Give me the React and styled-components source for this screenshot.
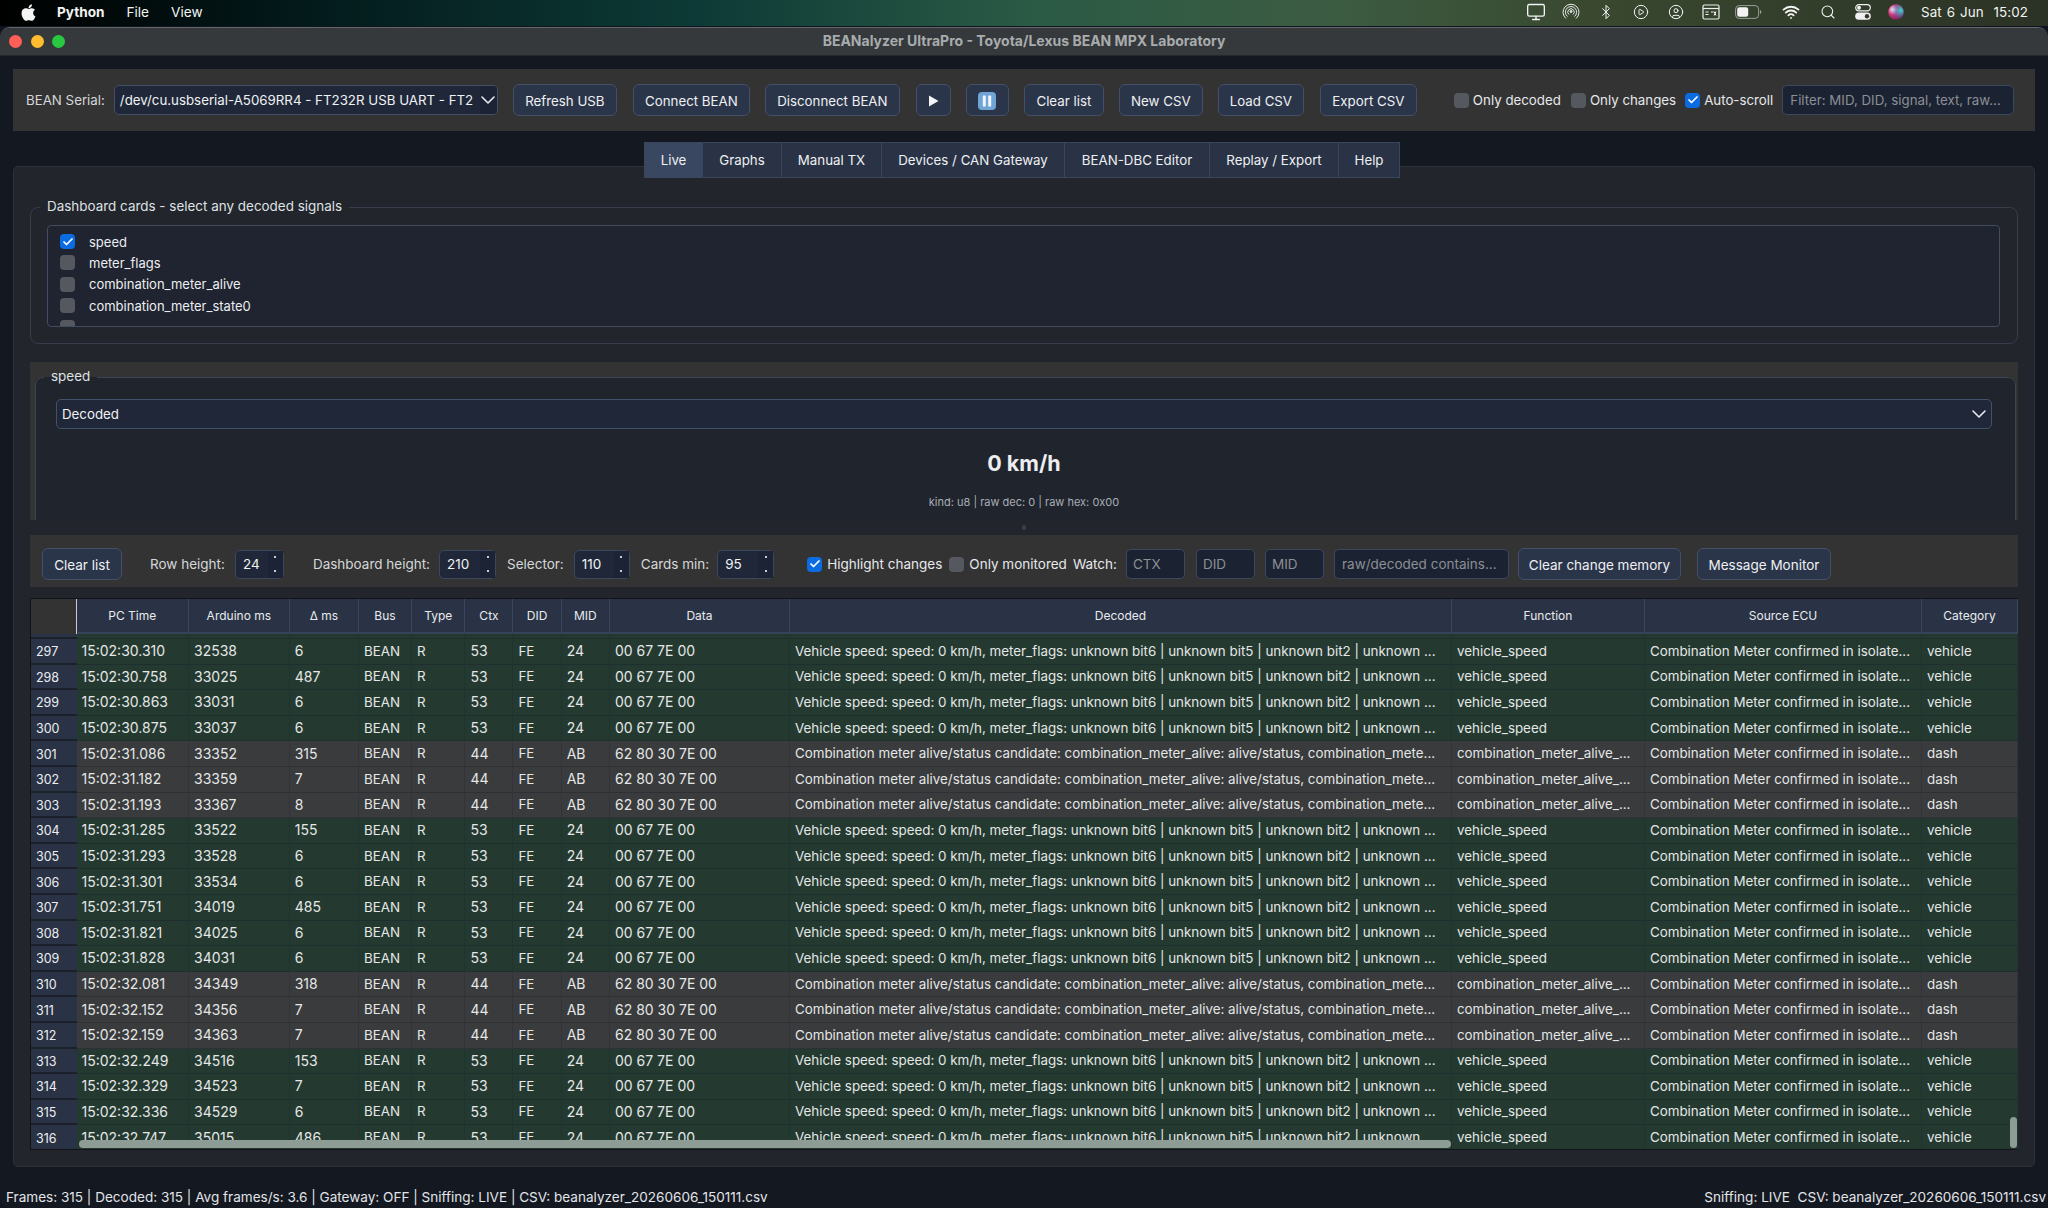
import React from 'react';
import styled, { createGlobalStyle } from 'styled-components';
import { FaApple } from 'react-icons/fa';
import { Bluetooth, CirclePlay, CircleUser, Monitor, Search, Wifi, ChevronDown, Check } from 'lucide-react';

const Global = createGlobalStyle`
  html, body { margin: 0; padding: 0; background: #10131b; }
  * { box-sizing: border-box; }
  body { font-family: Inter, "Noto Sans", sans-serif; font-size: 13.3px; color: #e6e8ec; }
`;

const Desktop = styled.div`
  width: 2048px; height: 1208px; overflow: hidden; display: flex; flex-direction: column;
  background: #101420;
`;
const MenuBar = styled.header`
  height: 26px; flex: none; display: flex; align-items: center;
  padding: 0 20px 2px 19px; color: #f2f4f2; font-size: 13.6px;
  background: linear-gradient(90deg, #000 0%, #031a1b 15%, #0d3a36 34%, #2a5a45 50%, #3c5c42 65%, #39482f 78%, #2b3226 100%);
`;
const MenuApple = styled.span`display: flex; margin-right: 19px; color: #f4f4f4; font-size: 19px;`;
const MenuItem = styled.span`margin-right: 22px; font-weight: ${p => (p.$bold ? 700 : 400)};`;
const MenuSpacer = styled.span`flex: 1;`;
const MenuIcon = styled.span`display: flex; width: ${p => p.$w || 22}px; justify-content: center; margin-right: ${p => p.$mr ?? 13}px; color: #f4f4f4;`;
const MenuClock = styled.span`font-size: 13.4px; word-spacing: 1px; letter-spacing: .1px; white-space: pre;`;

const Win = styled.main`
  flex: 1; margin-top: 1px; min-height: 0; display: flex; flex-direction: column;
  border-radius: 10px 10px 0 10px; overflow: hidden; background: #141821;
  border-top: 1px solid #63676a;
`;
const TitleBar = styled.div`
  height: 28px; flex: none; position: relative; display: flex; align-items: center; justify-content: center;
  padding-bottom: 2px; background: #36393b; color: #a8acae; font-size: 14px; font-weight: 700; border-bottom: 1px solid #23262a;
`;
const Lights = styled.div`position: absolute; left: 9px; top: 7px; display: flex; gap: 8.5px;`;
const Light = styled.i`display: block; width: 13px; height: 13px; border-radius: 50%; background: ${p => p.$c};`;
const Body = styled.div`flex: 1; min-height: 0; display: flex; flex-direction: column; padding: 13px 13px 0;`;

const TopBar = styled.section`
  height: 62px; flex: none; background: #333333; display: flex; align-items: center; padding: 0 0 0 13px;
`;
const Text = styled.span`white-space: nowrap; color: ${p => p.$dim ? '#d5d7da' : '#e6e8ec'}; margin-left: ${p => p.$ml || 0}px; margin-right: ${p => p.$mr || 0}px;`;
const Combo = styled.div`
  height: ${p => p.$h || 30}px; width: ${p => p.$w}px; margin-left: ${p => p.$ml || 0}px; flex: none; display: flex; align-items: center;
  border: 1px solid #44506a; border-radius: 5px; background: #1f2738; padding-left: 5px; position: relative; color: #f0f2f5; white-space: nowrap; overflow: hidden;
`;
const ComboArrow = styled.span`
  position: absolute; right: 0; top: 0; bottom: 0; width: 17px; display: flex; align-items: center; justify-content: center; color: #e8eaf0; background: #1b2334;
`;
const Btn = styled.button`
  height: ${p => p.$h || 32}px; width: ${p => p.$w}px; margin-left: ${p => p.$ml || 0}px; flex: none; padding: 1px 0 0; font: inherit;
  color: #eef0f3; background: #2b3549; border: 1px solid #435068; border-radius: 6px; display: flex; align-items: center; justify-content: center; white-space: nowrap;
`;
const CheckBox = styled.span`
  flex: none; width: 15px; height: 15px; border-radius: 4px; margin-left: ${p => p.$ml || 0}px; display: flex; align-items: center; justify-content: center;
  background: ${p => (p.$on ? '#0b6be0' : '#55585f')}; color: #fff;
`;
const Field = styled.div`
  height: 30px; width: ${p => p.$w}px; margin-left: ${p => p.$ml || 0}px; flex: none; display: flex; align-items: center; padding-left: ${p => p.$pl || 7}px;
  border: 1px solid #3c4860; border-radius: 5px; background: #1b2231; color: #8b8f96; white-space: nowrap; overflow: hidden;
`;

const TabRow = styled.nav`
  flex: none; height: 36px; margin-top: 11px; padding-right: 4px; display: flex; justify-content: center; position: relative; z-index: 1;
`;
const Tab = styled.div`
  width: ${p => p.$w}px; height: 36px; display: flex; align-items: center; justify-content: center; color: #eef0f3;
  background: ${p => (p.$on ? '#3a4760' : '#2a3345')}; border: 1px solid #3a465c; border-left-width: ${p => (p.$first ? 1 : 0)}px;
`;
const Pane = styled.section`
  height: 1001px; flex: none; margin-top: -12px; padding: 0 16px 0 16px; border: 1px solid #2e3137; border-radius: 5px; background: #22252b;
  display: flex; flex-direction: column;
`;
const Group = styled.fieldset`
  margin: 31px 0 0 0; padding: 0 17px 0 16px; height: 146px; flex: none; border: 1px solid #363d4b; border-radius: 8px; min-width: 0;
  background: #22252b;
`;
const Legend = styled.legend`
  margin-left: ${p => p.$ml}px; padding: 0 7px 2px; font-size: 13.45px; color: #dfe1e4; line-height: 16px;
`;
const ListBox = styled.div`
  height: 102px; overflow: hidden; border: 1px solid #414c62; border-radius: 4px; background: #1f2430; padding: 8px 0 0 12px; margin-top: 9px;
  display: flex; flex-direction: column; gap: 6.4px;
`;
const ListRow = styled.div`height: 15px; flex: none; display: flex; align-items: center; gap: 14px; font-size: 13px; color: #eceef1;`;

const CardShell = styled.section`
  flex: none; height: 158px; margin-top: 18px; background: #333333; padding: 6px 2px 0 5px; overflow: hidden;
`;
const CardGroup = styled.fieldset`
  margin: 0; padding: 0 23px 0 20px; height: 190px; border: 1px solid #3c4553; border-radius: 8px; background: #20242d; min-width: 0;
`;
const CardSelect = styled.div`
  height: 30px; display: flex; align-items: center; margin-top: 13px; padding: 0 0 0 5px; border: 1px solid #44506a; border-radius: 5px; background: #1f2738;
  color: #f0f2f5; justify-content: space-between;
`;
const BigValue = styled.div`margin-top: 20px; text-align: center; font-size: 21.5px; line-height: 28px; font-weight: 700; color: #eceef2;`;
const SubValue = styled.div`margin-top: 18px; text-align: center; font-size: 11px; line-height: 14px; color: #a9adb5;`;
const Handle = styled.div`
  flex: none; height: 15px; display: flex; align-items: center; justify-content: center;
  &::after { content: ""; width: 4px; height: 5px; border-radius: 2px; background: #3c4048; }
`;
const Tools = styled.section`
  flex: none; height: 52px; background: #333333; display: flex; align-items: center; padding: 6px 0 0 12px; font-size: 13.5px;
`;
const Spin = styled.div`
  height: 29px; width: ${p => p.$w}px; margin-left: ${p => p.$ml || 0}px; flex: none; display: flex; align-items: center; padding-left: 7px; position: relative;
  border: 1px solid #3c4860; border-radius: 5px; background: #1f2738; color: #f0f2f5;
`;
const Stepper = styled.span`
  position: absolute; right: 0; top: 0; bottom: 0; width: 15px; background: #1b2334; display: flex; flex-direction: column; justify-content: space-around; align-items: center;
  &::before, &::after { content: ""; width: 2px; height: 2px; background: #c9ccd2; }
`;

const COLS = '45.5px 112.5px 100.7px 69.3px 53px 53.5px 48px 48.2px 48.3px 180px 662px 193px 277px 1fr';
const Table = styled.section`
  flex: none; height: 552px; margin-top: 11px; position: relative; overflow: hidden; background: #1e2430;
  border: 1px solid #111318; border-width: 1px 0 1px 1px;
`;
const HeadRow = styled.div`
  display: grid; grid-template-columns: ${COLS}; height: 35px;
`;
const Corner = styled.div`background: #333333; border-right: 1px solid #c8ccd2;`;
const HeadCell = styled.div`
  display: flex; align-items: center; justify-content: center; font-size: 12px; color: #e8eaee; background: #2a3345; border-right: 1px solid #3a465c; border-bottom: 2px solid #36425a;
`;
const Row = styled.div`
  display: grid; grid-template-columns: ${COLS}; height: ${p => p.$h || 25.6}px; overflow: hidden;
`;
const RowHead = styled.div`
  display: flex; align-items: center; padding: 2px 0 0 5px; font-size: 12.5px; color: #eceef2; background: #2a3345; border-bottom: 2px solid #1b202b; overflow: hidden;
`;
const Cell = styled.div`
  display: flex; align-items: center; padding: 0 0 1px 5px; white-space: nowrap; overflow: hidden; color: #e4e7e6; font-size: ${p => (p.$num ? 14 : 13.36)}px;
  background: ${p => (p.$kind === 'c' ? '#3a3b3d' : '#243a31')};
  border-right: 1px solid ${p => (p.$kind === 'c' ? '#33343a' : '#20332e')};
  border-bottom: 1px solid ${p => (p.$kind === 'c' ? '#2f3035' : '#1f2f2f')};
`;
const HBar = styled.div`position: absolute; left: 48px; width: 1372px; bottom: 1px; height: 8px; border-radius: 4px; background: #8e9c96;`;
const VBar = styled.div`position: absolute; right: 1px; bottom: 1px; width: 7px; height: 31px; border-radius: 4px; background: #8e9c96;`;

const Status = styled.footer`
  flex: 1; display: flex; align-items: center; justify-content: space-between; margin: 0 -11px 0 -7px; padding-top: 18px; font-size: 13.56px; color: #e2e4e8;
`;

const V = { ctx: '53', mid: '24', data: '00 67 7E 00', dec: 'Vehicle speed: speed: 0 km/h, meter_flags: unknown bit6 | unknown bit5 | unknown bit2 | unknown ...', fn: 'vehicle_speed', cat: 'vehicle', kind: 'v' };
const C = { ctx: '44', mid: 'AB', data: '62 80 30 7E 00', dec: 'Combination meter alive/status candidate: combination_meter_alive: alive/status, combination_mete...', fn: 'combination_meter_alive_...', cat: 'dash', kind: 'c' };
const ROWS = [
  [297, '30.310', 32538, 6, V], [298, '30.758', 33025, 487, V], [299, '30.863', 33031, 6, V], [300, '30.875', 33037, 6, V],
  [301, '31.086', 33352, 315, C], [302, '31.182', 33359, 7, C], [303, '31.193', 33367, 8, C], [304, '31.285', 33522, 155, V],
  [305, '31.293', 33528, 6, V], [306, '31.301', 33534, 6, V], [307, '31.751', 34019, 485, V], [308, '31.821', 34025, 6, V],
  [309, '31.828', 34031, 6, V], [310, '32.081', 34349, 318, C], [311, '32.152', 34356, 7, C], [312, '32.159', 34363, 7, C],
  [313, '32.249', 34516, 153, V], [314, '32.329', 34523, 7, V], [315, '32.336', 34529, 6, V], [316, '32.747', 35015, 486, V],
];
const HEAD = ['PC Time', 'Arduino ms', 'Δ ms', 'Bus', 'Type', 'Ctx', 'DID', 'MID', 'Data', 'Decoded', 'Function', 'Source ECU', 'Category'];
const SOURCE = 'Combination Meter confirmed in isolate...';

const CheckMark = () => <Check size={12} strokeWidth={3.5} />;

const AirDrop = () => (
  <svg width="18" height="18" viewBox="0 0 18 18" fill="none" stroke="#e8e8e8" strokeWidth="1">
    <path d="M4 15.5A8 8 0 1 1 14 15.5" /><path d="M5.5 13.5A5.6 5.6 0 1 1 12.5 13.5" /><path d="M7 11.5A3.2 3.2 0 1 1 11 11.5" /><circle cx="9" cy="8.5" r="1" fill="#e8e8e8" />
  </svg>
);
const WindowMenu = () => (
  <svg width="18" height="16" viewBox="0 0 18 16" fill="none" stroke="#f0f0f0" strokeWidth="1.2">
    <rect x="1" y="1" width="16" height="14" rx="1.5" /><path d="M1 4.5h16" /><path d="M3.5 8h3M3.5 10.5h3M9 8h2.5M14 7.5l-2 4M12 7.5l2 4" strokeWidth="1" />
  </svg>
);
const Battery = () => (
  <svg width="27" height="14" viewBox="0 0 27 14">
    <rect x=".6" y=".6" width="23" height="12.8" rx="3.5" fill="none" stroke="#9a9d96" strokeWidth="1" />
    <rect x="2.2" y="2.2" width="11" height="9.6" rx="2" fill="#f2f2f2" />
    <path d="M25 5v4a2 2 0 0 0 1.4-2 2 2 0 0 0-1.4-2z" fill="#9a9d96" />
  </svg>
);
const ControlCenter = () => (
  <svg width="16" height="16" viewBox="0 0 16 16" fill="none">
    <rect x=".7" y=".7" width="14.6" height="6.2" rx="3.1" stroke="#f0f0f0" strokeWidth="1.2" /><circle cx="4" cy="3.8" r="2" fill="#f0f0f0" />
    <rect x=".2" y="8.6" width="15.6" height="7.2" rx="3.6" fill="#f0f0f0" /><circle cx="12" cy="12.2" r="2.2" fill="#33362c" />
  </svg>
);
const Siri = () => (
  <svg width="16" height="16" viewBox="0 0 16 16">
    <defs>
      <radialGradient id="s1" cx=".3" cy=".35" r=".7"><stop offset="0" stopColor="#f2f2ff" /><stop offset=".45" stopColor="#d23a7c" /><stop offset="1" stopColor="#7a1f58" /></radialGradient>
      <radialGradient id="s2" cx=".8" cy=".4" r=".6"><stop offset="0" stopColor="#40d8c8" /><stop offset="1" stopColor="#2a7ad0" stopOpacity="0" /></radialGradient>
    </defs>
    <circle cx="8" cy="8" r="7.8" fill="url(#s1)" /><circle cx="8" cy="8" r="7.8" fill="url(#s2)" />
  </svg>
);
const Pause = () => (
  <svg width="18" height="18" viewBox="0 0 18 18">
    <rect x="0" y="0" width="18" height="18" rx="4" fill="#6fa4d6" /><rect x="4.8" y="3.5" width="3" height="11" rx=".6" fill="#f2f6fa" /><rect x="10.2" y="3.5" width="3" height="11" rx=".6" fill="#f2f6fa" />
  </svg>
);
const Play = () => <svg width="11" height="12" viewBox="0 0 11 12"><path d="M1 .5 10.5 6 1 11.5z" fill="#f4f5f7" /></svg>;

export default function App() {
  return (
    <Desktop>
      <Global />
      <MenuBar>
        <MenuApple><FaApple /></MenuApple>
        <MenuItem $bold>Python</MenuItem>
        <MenuItem>File</MenuItem>
        <MenuItem>View</MenuItem>
        <MenuSpacer />
        <MenuIcon><Monitor size={20} strokeWidth={1.6} /></MenuIcon>
        <MenuIcon><AirDrop /></MenuIcon>
        <MenuIcon><Bluetooth size={16} strokeWidth={1.5} /></MenuIcon>
        <MenuIcon><CirclePlay size={16} strokeWidth={1.5} /></MenuIcon>
        <MenuIcon><CircleUser size={16} strokeWidth={1.5} /></MenuIcon>
        <MenuIcon><WindowMenu /></MenuIcon>
        <MenuIcon $w={27} $mr={18}><Battery /></MenuIcon>
        <MenuIcon $mr={15}><Wifi size={18} strokeWidth={2.4} /></MenuIcon>
        <MenuIcon><Search size={16} strokeWidth={1.6} /></MenuIcon>
        <MenuIcon $mr={11}><ControlCenter /></MenuIcon>
        <MenuIcon $mr={14}><Siri /></MenuIcon>
        <MenuClock>Sat 6 Jun  15:02</MenuClock>
      </MenuBar>
      <Win>
        <TitleBar>
          <Lights><Light $c="#ff5f57" /><Light $c="#febc2e" /><Light $c="#28c840" /></Lights>
          BEANalyzer UltraPro - Toyota/Lexus BEAN MPX Laboratory
        </TitleBar>
        <Body>
          <TopBar>
            <Text $dim>BEAN Serial:</Text>
            <Combo $w={384} $ml={9}>/dev/cu.usbserial-A5069RR4 - FT232R USB UART - FT2<ComboArrow><ChevronDown size={24} strokeWidth={1.6} style={{ flex: 'none' }} /></ComboArrow></Combo>
            <Btn $w={104} $ml={15}>Refresh USB</Btn>
            <Btn $w={117} $ml={16}>Connect BEAN</Btn>
            <Btn $w={135} $ml={15}>Disconnect BEAN</Btn>
            <Btn $w={35} $ml={16}><Play /></Btn>
            <Btn $w={43} $ml={15}><Pause /></Btn>
            <Btn $w={80} $ml={15}>Clear list</Btn>
            <Btn $w={84} $ml={15}>New CSV</Btn>
            <Btn $w={86} $ml={15}>Load CSV</Btn>
            <Btn $w={97} $ml={16}>Export CSV</Btn>
            <CheckBox $ml={37} />
            <Text $ml={4}>Only decoded</Text>
            <CheckBox $ml={10} />
            <Text $ml={4}>Only changes</Text>
            <CheckBox $ml={9} $on><CheckMark /></CheckBox>
            <Text $ml={4}>Auto-scroll</Text>
            <Field $w={232} $ml={9}>Filter: MID, DID, signal, text, raw...</Field>
          </TopBar>
          <TabRow>
            <Tab $w={59} $on $first>Live</Tab>
            <Tab $w={79}>Graphs</Tab>
            <Tab $w={100}>Manual TX</Tab>
            <Tab $w={183}>Devices / CAN Gateway</Tab>
            <Tab $w={145}>BEAN-DBC Editor</Tab>
            <Tab $w={129}>Replay / Export</Tab>
            <Tab $w={61}>Help</Tab>
          </TabRow>
          <Pane>
            <Group>
              <Legend $ml={-7}>Dashboard cards - select any decoded signals</Legend>
              <ListBox>
                <ListRow><CheckBox $on><CheckMark /></CheckBox>speed</ListRow>
                <ListRow><CheckBox />meter_flags</ListRow>
                <ListRow><CheckBox />combination_meter_alive</ListRow>
                <ListRow><CheckBox />combination_meter_state0</ListRow>
                <ListRow><CheckBox /></ListRow>
              </ListBox>
            </Group>
            <CardShell>
              <CardGroup>
                <Legend $ml={-12}>speed</Legend>
                <CardSelect>Decoded<ChevronDown size={24} strokeWidth={1.6} color="#e8eaf0" /></CardSelect>
                <BigValue>0 km/h</BigValue>
                <SubValue>kind: u8 | raw dec: 0 | raw hex: 0x00</SubValue>
              </CardGroup>
            </CardShell>
            <Handle />
            <Tools>
              <Btn $w={80}>Clear list</Btn>
              <Text $dim $ml={28}>Row height:</Text>
              <Spin $w={49} $ml={10}>24<Stepper /></Spin>
              <Text $dim $ml={29}>Dashboard height:</Text>
              <Spin $w={57} $ml={9}>210<Stepper /></Spin>
              <Text $dim $ml={11}>Selector:</Text>
              <Spin $w={56} $ml={10}>110<Stepper /></Spin>
              <Text $dim $ml={11}>Cards min:</Text>
              <Spin $w={57} $ml={8}>95<Stepper /></Spin>
              <CheckBox $ml={33} $on><CheckMark /></CheckBox>
              <Text $ml={5}>Highlight changes</Text>
              <CheckBox $ml={7} />
              <Text $ml={5}>Only monitored</Text>
              <Text $ml={6}>Watch:</Text>
              <Field $w={59} $ml={9} $pl={6}>CTX</Field>
              <Field $w={59} $ml={11} $pl={6}>DID</Field>
              <Field $w={59} $ml={10} $pl={6}>MID</Field>
              <Field $w={175} $ml={10}>raw/decoded contains...</Field>
              <Btn $w={163} $ml={9}>Clear change memory</Btn>
              <Btn $w={134} $ml={16}>Message Monitor</Btn>
            </Tools>
            <Table>
              <HeadRow>
                <Corner />
                {HEAD.map(h => <HeadCell key={h}>{h}</HeadCell>)}
              </HeadRow>
              <Row $h={5}>
                <RowHead />
                {HEAD.map(h => <Cell key={h} />)}
              </Row>
              {ROWS.map(([n, t, a, d, k]) => (
                <Row key={n}>
                  <RowHead>{n}</RowHead>
                  <Cell $num $kind={k.kind}>15:02:{t}</Cell>
                  <Cell $num $kind={k.kind}>{a}</Cell>
                  <Cell $num $kind={k.kind}>{d}</Cell>
                  <Cell $kind={k.kind}>BEAN</Cell>
                  <Cell $kind={k.kind}>R</Cell>
                  <Cell $num $kind={k.kind}>{k.ctx}</Cell>
                  <Cell $kind={k.kind}>FE</Cell>
                  <Cell $num $kind={k.kind}>{k.mid}</Cell>
                  <Cell $num $kind={k.kind}>{k.data}</Cell>
                  <Cell $kind={k.kind}>{k.dec}</Cell>
                  <Cell $kind={k.kind}>{k.fn}</Cell>
                  <Cell $kind={k.kind}>{SOURCE}</Cell>
                  <Cell $kind={k.kind}>{k.cat}</Cell>
                </Row>
              ))}
              <HBar />
              <VBar />
            </Table>
          </Pane>
          <Status>
            <span>Frames: 315 | Decoded: 315 | Avg frames/s: 3.6 | Gateway: OFF | Sniffing: LIVE | CSV: beanalyzer_20260606_150111.csv</span>
            <span>Sniffing: LIVE&nbsp;&nbsp;CSV: beanalyzer_20260606_150111.csv</span>
          </Status>
        </Body>
      </Win>
    </Desktop>
  );
}
